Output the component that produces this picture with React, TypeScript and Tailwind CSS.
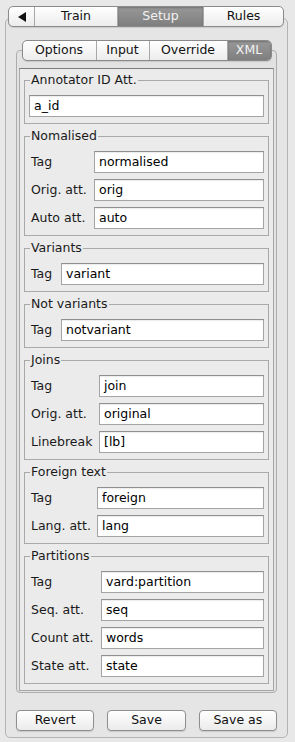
import React from 'react';

type Row = { label?: string; value: string };
type Group = { title: string; cols: string; rows: Row[] };

const groups: Group[] = [
    { title: 'Annotator ID Att.', cols: 'grid-cols-[1fr]', rows: [{ value: 'a_id' }] },
    {
        title: 'Nomalised',
        cols: 'grid-cols-[57px_1fr]',
        rows: [
            { label: 'Tag', value: 'normalised' },
            { label: 'Orig. att.', value: 'orig' },
            { label: 'Auto att.', value: 'auto' },
        ],
    },
    { title: 'Variants', cols: 'grid-cols-[24px_1fr]', rows: [{ label: 'Tag', value: 'variant' }] },
    { title: 'Not variants', cols: 'grid-cols-[24px_1fr]', rows: [{ label: 'Tag', value: 'notvariant' }] },
    {
        title: 'Joins',
        cols: 'grid-cols-[62px_1fr]',
        rows: [
            { label: 'Tag', value: 'join' },
            { label: 'Orig. att.', value: 'original' },
            { label: 'Linebreak', value: '[lb]' },
        ],
    },
    {
        title: 'Foreign text',
        cols: 'grid-cols-[60px_1fr]',
        rows: [
            { label: 'Tag', value: 'foreign' },
            { label: 'Lang. att.', value: 'lang' },
        ],
    },
    {
        title: 'Partitions',
        cols: 'grid-cols-[64px_1fr]',
        rows: [
            { label: 'Tag', value: 'vard:partition' },
            { label: 'Seq. att.', value: 'seq' },
            { label: 'Count att.', value: 'words' },
            { label: 'State att.', value: 'state' },
        ],
    },
];

type Segment = { key: string; label: React.ReactNode; width: string };

const Segmented = ({ items, selected }: { items: Segment[]; selected: string }) => (
    <div className="relative z-10 flex h-[21px] rounded-[5px] border border-[#8b8b8b] bg-linear-to-b from-white to-[#ececec] overflow-hidden shadow-[0_1px_1px_rgba(0,0,0,0.12)]">
        {items.map((item, i) => {
            const active = item.key === selected;
            return (
                <div
                    key={item.key}
                    className={`${item.width} flex items-center justify-center text-[12.5px] leading-none ${
                        i > 0 ? 'border-l border-[#a8a8a8]' : ''
                    } ${
                        active
                            ? 'bg-linear-to-b from-[#989898] to-[#7f7f7f] text-[#f2f2f2] shadow-[inset_0_1px_2px_rgba(0,0,0,0.25)]'
                            : 'text-[#111]'
                    }`}
                >
                    {item.label}
                </div>
            );
        })}
    </div>
);

const Field = ({ value }: { value: string }) => (
    <div className="h-[22px] flex items-center pl-[4px] bg-white border border-[#a4a4a4] border-t-[#8f8f8f] shadow-[inset_0_1px_1px_rgba(0,0,0,0.08)] text-[12.5px] text-black whitespace-nowrap overflow-hidden">
        {value}
    </div>
);

const GroupBox = ({ group }: { group: Group }) => (
    <fieldset className="border border-[#a9a9a9] pl-[4px] pr-[4px] pt-[8px] pb-[6px]">
        <legend className="ml-[1px] px-[1px] text-[12.5px] leading-[14px] text-[#1a1a1a]">{group.title}</legend>
        <div className={`grid ${group.cols} gap-x-[8px] gap-y-[6px] items-center`}>
            {group.rows.map(row => (
                <React.Fragment key={group.title + row.value}>
                    {row.label && (
                        <span className="pl-[2px] text-[12.5px] text-[#1a1a1a] whitespace-nowrap">{row.label}</span>
                    )}
                    <Field value={row.value} />
                </React.Fragment>
            ))}
        </div>
    </fieldset>
);

const Button = ({ children }: { children: React.ReactNode }) => (
    <button className="w-[79px] h-[21px] rounded-[4px] border border-[#8e8e8e] bg-linear-to-b from-white to-[#ebebeb] shadow-[0_1px_1px_rgba(0,0,0,0.12)] text-[12.5px] text-[#111] leading-none">
        {children}
    </button>
);

const BackArrow = () => (
    <svg width="8" height="10" viewBox="0 0 8 10">
        <polygon points="8,0 8,10 0,5" fill="#111" />
    </svg>
);

const App = () => {
    const outerTabs: Segment[] = [
        { key: 'back', label: <BackArrow />, width: 'w-[25px]' },
        { key: 'train', label: 'Train', width: 'w-[83px]' },
        { key: 'setup', label: 'Setup', width: 'w-[86px]' },
        { key: 'rules', label: 'Rules', width: 'flex-1' },
    ];
    const innerTabs: Segment[] = [
        { key: 'options', label: 'Options', width: 'w-[73px]' },
        { key: 'input', label: 'Input', width: 'w-[53px]' },
        { key: 'override', label: 'Override', width: 'w-[78px]' },
        { key: 'xml', label: 'XML', width: 'flex-1' },
    ];

    return (
        <div className="w-[295px] h-[742px] bg-[#e8e8e8] pt-[6px] font-['Lucida_Grande','DejaVu_Sans',sans-serif] overflow-hidden">
            <div className="ml-[8px] w-[276px]">
                <Segmented items={outerTabs} selected="setup" />
            </div>

            {/* outer tab pane */}
            <div className="-mt-[9px] ml-[5px] w-[283px] rounded-[5px] border border-[#b3b3b3] bg-[#e5e5e5] px-[10px] pt-[21px] pb-[6px]">
                <div className="mx-auto w-[250px]">
                    <Segmented items={innerTabs} selected="xml" />
                </div>

                {/* inner tab pane */}
                <div className="-mt-[11px] rounded-[4px] border border-[#adadad] bg-[#e2e2e2] px-[2px] pt-[17px] pb-[1px]">
                    <div className="border border-[#a6a6a6] border-t-[#7c7c7c] bg-[#ebebeb] pl-[4px] pr-[4px] pt-[4px] pb-[6px] flex flex-col gap-[5px]">
                        {groups.map(group => (
                            <GroupBox key={group.title} group={group} />
                        ))}
                    </div>
                </div>

                <div className="mt-[17px] flex justify-center gap-[13px]">
                    <Button>Revert</Button>
                    <Button>Save</Button>
                    <Button>Save as</Button>
                </div>
            </div>
        </div>
    );
};

export default App;
